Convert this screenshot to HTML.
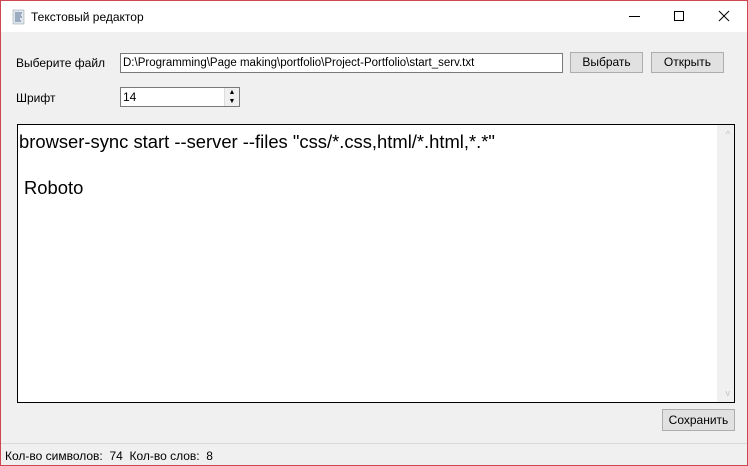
<!DOCTYPE html>
<html><head><meta charset="utf-8"><style>
*{margin:0;padding:0;box-sizing:border-box}
body{width:748px;height:466px;overflow:hidden;background:#f0f0f0;font-family:"Liberation Sans",sans-serif;font-size:12px;color:#000;position:relative}
.win{position:absolute;left:0;top:0;width:748px;height:466px;border:1px solid #d0464f;}
.title{position:absolute;left:0;top:0;width:746px;height:31px;background:#fff}
.abs{position:absolute}
.btn{position:absolute;background:#e1e1e1;border:1px solid #adadad;text-align:center;line-height:19px;font-size:12px}
.inp{position:absolute;background:#fff;border:1px solid #7a7a7a;font-size:12px;padding-left:3px;line-height:18px}
</style></head><body><div class="win">
<div class="title">
 <svg class="abs" style="left:10px;top:8px" width="16" height="16" viewBox="0 0 16 16"><rect x="2" y="1" width="11" height="14" fill="#dfe6ee" stroke="#9aa" stroke-width=".6"/><path d="M4 4h7M4 6h6M4 8h7M4 10h5M4 12h6" stroke="#5a7090" stroke-width="1"/></svg>
 <div class="abs" style="left:30px;top:9px;font-size:12px">Текстовый редактор</div>
 <div class="abs" style="left:628px;top:15px;width:11px;height:1px;background:#000"></div>
 <div class="abs" style="left:673px;top:10px;width:10px;height:10px;border:1px solid #000"></div>
 <svg class="abs" style="left:717px;top:9px" width="12" height="12"><path d="M1 1L11 11M11 1L1 11" stroke="#000" stroke-width="1"/></svg>
</div>
<div class="abs" style="left:15px;top:55px">Выберите файл</div>
<div class="inp" style="left:119px;top:52px;width:443px;height:20px;font-size:11.5px;padding-left:2px">D:\Programming\Page making\portfolio\Project-Portfolio\start_serv.txt</div>
<div class="btn" style="left:569px;top:51px;width:73px;height:21px">Выбрать</div>
<div class="btn" style="left:650px;top:51px;width:73px;height:21px">Открыть</div>
<div class="abs" style="left:15px;top:90px">Шрифт</div>
<div class="inp" style="left:119px;top:86px;width:120px;height:20px;padding-left:2px">14</div>
<div class="abs" style="left:223px;top:87px;width:15px;height:18px;border-left:1px solid #ddd;font-size:7px;line-height:9px;text-align:center;background:#f0f0f0">▲<br>▼</div>
<div class="abs" style="left:16px;top:123px;width:718px;height:279px;background:#fff;border:1px solid #000">
 <div class="abs" style="right:0;top:0;width:17px;height:277px;background:#f0f0f0"></div>
 <div class="abs" style="right:4px;top:4px;font-size:9px;color:#c0c0c0">^</div>
 <div class="abs" style="right:4px;bottom:4px;font-size:9px;color:#c0c0c0">v</div>
 <div class="abs" style="left:1px;top:6px;font-size:18.4px">browser-sync start --server --files "css/*.css,html/*.html,*.*"</div>
 <div class="abs" style="left:6px;top:52px;font-size:18.4px">Roboto</div>
</div>
<div class="btn" style="left:661px;top:408px;width:73px;height:22px;line-height:21px">Сохранить</div>
<div class="abs" style="left:0;top:442px;width:746px;height:1px;background:#d8d8d8"></div>
<div class="abs" style="left:4px;top:448px">Кол-во символов:&nbsp; 74&nbsp; Кол-во слов:&nbsp; 8</div>
</div></body></html>
